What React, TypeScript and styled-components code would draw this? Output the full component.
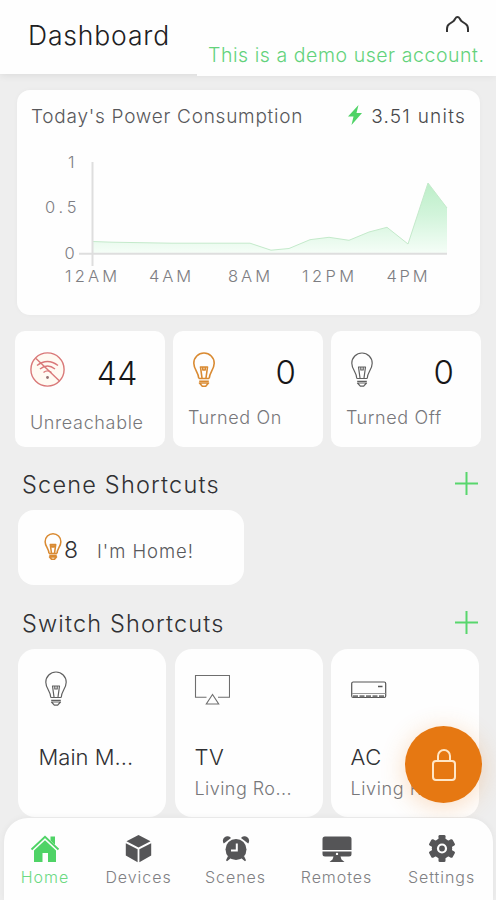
import React from "react";
import styled, { createGlobalStyle } from "styled-components";

const GlobalStyle = createGlobalStyle`
  *, *::before, *::after { box-sizing: border-box; }
  body { margin: 0; background: #eeeeee; font-family: Inter, "Liberation Sans", sans-serif; font-weight: 300; }
  svg { display: block; flex: none; }
`;

const Screen = styled.div`
  position: relative;
  width: 496px;
  height: 900px;
  overflow: hidden;
  background: #eeeeee;
  display: flex;
  flex-direction: column;
`;

const Label = styled.span<{ $size: number; $color?: string; $track?: number; $line?: number }>`
  font-size: ${(p) => p.$size}px;
  line-height: ${(p) => p.$line ?? 24}px;
  letter-spacing: ${(p) => p.$track ?? 0}px;
  color: ${(p) => p.$color ?? "#77777a"};
  white-space: nowrap;
`;

const Header = styled.header`
  position: relative;
  flex: none;
  height: 74px;
  padding: 20px 0 0 28px;
  background: #fefefe;
  box-shadow: 0 1px 8px rgba(0, 0, 0, 0.09);
`;

const HomeOutline = styled.svg`
  position: absolute;
  top: 14px;
  left: 445px;
`;

const DemoBanner = styled.div`
  position: absolute;
  top: 42px;
  right: 0;
  width: 299px;
  height: 34px;
  padding: 1px 0 0 11px;
  background: #fefefe;
`;

const PowerCard = styled.section`
  flex: none;
  margin: 16px 16px 0 17px;
  height: 225px;
  background: #fefefe;
  border-radius: 13px;
  box-shadow: 0 0 5px rgba(0, 0, 0, 0.03);
`;

const PowerHeading = styled.div`
  display: flex;
  justify-content: space-between;
  align-items: center;
  height: 52px;
  padding: 1px 14px 0 14px;
`;

const Units = styled.div`
  display: flex;
  align-items: center;
  gap: 8px;
`;

const Bolt = styled.svg`
  margin: -4px 1px 0 0;
`;

const Stats = styled.section`
  flex: none;
  display: grid;
  grid-template-columns: repeat(3, 150px);
  column-gap: 8px;
  margin: 16px 0 0 15.4px;
`;

const StatCard = styled.div<{ $gap: number }>`
  height: 116px;
  padding: 21px 0 0 14.5px;
  background: #fefefe;
  border-radius: 10px;
  display: flex;
  flex-direction: column;
  gap: ${(p) => p.$gap}px;
`;

const StatTop = styled.div<{ $drop: number }>`
  display: flex;
  justify-content: space-between;
  align-items: flex-start;
  height: 40px;
  padding-right: 27.5px;
  & > span { margin-top: ${(p) => p.$drop}px; }
`;

const SectionHeading = styled.div<{ $top: number }>`
  flex: none;
  display: flex;
  justify-content: space-between;
  align-items: flex-start;
  height: 30px;
  margin-top: ${(p) => p.$top}px;
  padding: 1px 18px 0 22px;
`;

const AddIcon = styled.svg`
  margin-top: 2px;
`;

const SceneCard = styled.div`
  flex: none;
  display: flex;
  width: 226px;
  height: 75px;
  margin: 11px 0 0 18px;
  padding: 23px 0 0 25.5px;
  background: #fefefe;
  border-radius: 16px;
`;

const SceneCount = styled.div`
  margin: 5px 0 0 2.5px;
  width: 33px;
`;

const SceneName = styled.div`
  margin-top: 6px;
`;

const Switches = styled.section`
  flex: none;
  display: grid;
  grid-template-columns: repeat(3, 148px);
  column-gap: 8.5px;
  margin: 11px 0 0 18px;
`;

const SwitchCard = styled.div`
  display: flex;
  flex-direction: column;
  height: 168px;
  padding: 22px 0 0 19.5px;
  background: #fefefe;
  border-radius: 17px;
`;

const SwitchIcon = styled.div<{ $left?: number }>`
  height: 72px;
  padding-left: ${(p) => p.$left ?? 0}px;
`;

const SwitchText = styled.div<{ $indent?: number }>`
  display: flex;
  flex-direction: column;
  gap: 6px;
  padding-left: ${(p) => p.$indent ?? 0}px;
`;

const LockButton = styled.button`
  position: absolute;
  left: 405px;
  top: 726px;
  width: 77px;
  height: 77px;
  padding: 0;
  border: 0;
  border-radius: 50%;
  background: #e67812;
  box-shadow: 0 4px 24px rgba(240, 140, 50, 0.3);
  display: grid;
  place-items: center;
`;

const NavBar = styled.nav`
  position: absolute;
  left: 4px;
  right: 3px;
  bottom: 0;
  height: 82px;
  background: #fefefe;
  border-radius: 24px 24px 0 0;
  box-shadow: 0 0 7px rgba(0, 0, 0, 0.05);
  display: grid;
  grid-template-columns: 82px 105px 89px 113px 97px;
`;

const NavItem = styled.a`
  display: flex;
  flex-direction: column;
  align-items: center;
  padding-top: 16px;
  gap: 2px;
`;

const GREEN = "#4fd366";
const ORANGE = "#d98a32";

function Bulb({ color, width = 22, height = 35, stroke = 1.2 }: { color: string; width?: number; height?: number; stroke?: number }) {
  return (
    <svg width={width} height={height} viewBox="0 0 22 35" fill="none" stroke={color} strokeWidth={stroke} strokeLinejoin="round">
      <path d="M5.8 26.5C5.8 20.5.8 17.5.8 11.2a10.2 10.2 0 0 1 20.4 0c0 6.3-5 9.3-5 15.3" />
      <path d="M9 26L7.5 15h7L13 26M9.8 15v3h2.4v-3" />
      <path d="M5.8 26.5h10.4M6.2 29.3h9.6M6.5 31l2.8 3.2h3.4l2.8-3.200z" />
    </svg>
  );
}

function NoSignal() {
  return (
    <svg width="35" height="35" viewBox="0 0 35 35" fill="none" stroke="#d97878" strokeWidth="1.4">
      <circle cx="17.5" cy="17.5" r="16.6" fill="#fffaf2" />
      <path d="M6 6.5L29.5 29" />
      <path d="M7 13.5q10.5-8 21 0M10 17q7.5-6 15 0M13.5 20.5q4-3.3 8 0" />
      <circle cx="17.5" cy="25.5" r="1.4" fill="#927171" stroke="none" />
    </svg>
  );
}

function Plus() {
  return (
    <AddIcon width="23" height="23" viewBox="0 0 23 23" stroke="#58d66d" strokeWidth="2">
      <path d="M11.5 0v23M0 11.5h23" />
    </AddIcon>
  );
}

function PowerChart() {
  const line = "M75 99.5L95 100.2L154 101.2H233L254 108.2L272 106.5L293 97.7L312 95.3L332 98.3L352 90L370 85.3L391 102L411 41L430 66";
  const tick = { fontSize: 16.5, fill: "#7d7d82", lengthAdjust: "spacing" as const };
  return (
    <svg width="463" height="173" viewBox="0 0 463 173">
      <defs>
        <linearGradient id="usage" x1="0" y1="41" x2="0" y2="112" gradientUnits="userSpaceOnUse">
          <stop offset="0" stopColor="#bceec8" />
          <stop offset="0.45" stopColor="#d2f4db" />
          <stop offset="1" stopColor="#f6fef8" />
        </linearGradient>
      </defs>
      <path d={`${line}V112H75Z`} fill="url(#usage)" />
      <path d={line} fill="none" stroke="#c4eacb" strokeWidth="1" />
      <path d="M75.5 20V124M62 111.7H430" stroke="#dedede" strokeWidth="2" fill="none" />
      <text {...tick} x="51" y="25.5">1</text>
      <text {...tick} x="28" y="71" textLength="31.5">0.5</text>
      <text {...tick} x="47.5" y="117">0</text>
      <text {...tick} x="48" y="140" textLength="52">12AM</text>
      <text {...tick} x="132" y="140" textLength="42">4AM</text>
      <text {...tick} x="211" y="140" textLength="42">8AM</text>
      <text {...tick} x="285" y="140" textLength="52">12PM</text>
      <text {...tick} x="369.5" y="140" textLength="41">4PM</text>
    </svg>
  );
}

function Television() {
  return (
    <svg width="36" height="34" viewBox="0 0 36 34" fill="none" stroke="#6e6e6e" strokeWidth="1.1">
      <path d="M12.5 26.3H1.5V4.5h34v21.8H24" />
      <path d="M18.5 23.5L12.3 33h12.4z" />
    </svg>
  );
}

function AirConditioner() {
  return (
    <svg width="36" height="28" viewBox="0 0 36 28" fill="none" stroke="#555" strokeWidth="1.2">
      <rect x=".7" y="11" width="34" height="15.5" rx="1.5" />
      <path d="M1 22.5h33.5" stroke="#999" />
      <path d="M2 25.3h32" strokeWidth="2" strokeDasharray="5 1.5" stroke="#777" />
      <path d="M27 15.500h4.500" strokeWidth="1.500" />
    </svg>
  );
}

function NavIcon({ name }: { name: string }) {
  if (name === "Home")
    return (
      <svg width="30" height="29" viewBox="0 0 30 29">
        <path d="M1.5 15.5L15 2.8L28.5 15.5" fill="none" stroke={GREEN} strokeWidth="1.9" />
        <path d="M20.5 2.5H25v8.3l-4.5-4.2zM15 6.2L26 16.5V28h-8v-9h-5.5v9H4V16.5z" fill={GREEN} />
      </svg>
    );
  if (name === "Devices")
    return (
      <svg width="27" height="29" viewBox="0 0 27 29" fill="#555557">
        <path d="M13.5 1L25.5 7.3L13.5 13.5L1.5 7.3zM.8 9.2L12.6 15.3V28.3L.8 21.5zM26.2 9.2L14.4 15.3V28.3l11.8-6.8z" />
      </svg>
    );
  if (name === "Scenes")
    return (
      <svg width="28" height="29" viewBox="0 0 28 29" fill="#555557">
        <path d="M1.8 9.5a4.5 4.5 0 0 1 7.2-5.5zM26.2 9.5a4.5 4.5 0 0 0-7.2-5.5zM6 22l3 2-4 3.2-1-1zM22 22l-3 2 4 3.2 1-1z" />
        <circle cx="14" cy="15.5" r="10.5" />
        <path d="M14.8 9.5v7H9" fill="none" stroke="#fefefe" strokeWidth="2" />
      </svg>
    );
  if (name === "Remotes")
    return (
      <svg width="30" height="29" viewBox="0 0 30 29" fill="#555557">
        <path d="M3 2.5h24a2.5 2.5 0 0 1 2.5 2.5v11H.5V5A2.5 2.5 0 0 1 3 2.5zM.5 17.5h29v2.5a2.5 2.5 0 0 1-2.5 2.5h-8.5l1 3 3 2.5H7.5l3-2.5 1-3H3a2.5 2.5 0 0 1-2.5-2.5z" />
        <circle cx="15" cy="19.9" r="1.2" fill="#fefefe" />
      </svg>
    );
  return (
    <svg width="28" height="29" viewBox="0 0 28 29" fill="#555557">
      <circle cx="14" cy="14.5" r="10.2" />
      {[0, 60, 120].map((a) => (
        <rect key={a} x="10.5" y="1" width="7" height="27" rx="1.3" transform={`rotate(${a} 14 14.5)`} />
      ))}
      <circle cx="14" cy="14.5" r="4" stroke="#fefefe" strokeWidth="2.2" />
    </svg>
  );
}

const navItems = ["Home", "Devices", "Scenes", "Remotes", "Settings"];

export default function App() {
  return (
    <Screen>
      <GlobalStyle />
      <Header>
        <Label $size={26.5} $line={30} $track={0.85} $color="#202022">Dashboard</Label>
        <HomeOutline width="25" height="20" viewBox="0 0 25 20" fill="none" stroke="#333" strokeWidth="2">
          <path d="M2 18v-3q0-3.500 2.300-5L8 7.500q1.200-.8 2-2.500 2.500-3.800 5 0 .8 1.700 2 2.500l3.700 2.500q2.300 1.500 2.300 5v3" />
        </HomeOutline>
        <DemoBanner>
          <Label $size={19.5} $track={0.55} $color="#63d27b">This is a demo user account.</Label>
        </DemoBanner>
      </Header>

      <PowerCard>
        <PowerHeading>
          <Label $size={19} $track={0.74} $color="#58585b">Today's Power Consumption</Label>
          <Units>
            <Bolt width="14" height="20" viewBox="0 0 14 20" fill={GREEN}>
              <path d="M10.5 0L0 11.5h5.5L3.5 20L14 8H8.5z" />
            </Bolt>
            <Label $size={19} $track={1.25} $color="#48484b">3.51 units</Label>
          </Units>
        </PowerHeading>
        <PowerChart />
      </PowerCard>

      <Stats>
        <StatCard $gap={19}>
          <StatTop $drop={1.5}>
            <NoSignal />
            <Label $size={32} $line={40} $track={0.5} $color="#161618">44</Label>
          </StatTop>
          <Label $size={18} $track={0.65}>Unreachable</Label>
        </StatCard>
        <StatCard $gap={14}>
          <StatTop $drop={-0.5}>
            <SwitchIcon $left={5.5}><Bulb color={ORANGE} stroke={1.6} /></SwitchIcon>
            <Label $size={33} $line={40} $color="#161618">0</Label>
          </StatTop>
          <Label $size={18} $track={0.6}>Turned On</Label>
        </StatCard>
        <StatCard $gap={14}>
          <StatTop $drop={-0.5}>
            <SwitchIcon $left={5.5}><Bulb color="#606060" /></SwitchIcon>
            <Label $size={33} $line={40} $color="#161618">0</Label>
          </StatTop>
          <Label $size={18} $track={0.6}>Turned Off</Label>
        </StatCard>
      </Stats>

      <SectionHeading $top={22}>
        <Label $size={23.5} $line={30} $track={1.2} $color="#303033">Scene Shortcuts</Label>
        <Plus />
      </SectionHeading>
      <SceneCard>
        <Bulb color={ORANGE} width={18} height={27} stroke={2} />
        <SceneCount><Label $size={23} $color="#303033">8</Label></SceneCount>
        <SceneName><Label $size={18.5} $track={0.95} $color="#58585b">I'm Home!</Label></SceneName>
      </SceneCard>
      <SectionHeading $top={22.5}>
        <Label $size={23.5} $line={30} $track={1.15} $color="#303033">Switch Shortcuts</Label>
        <Plus />
      </SectionHeading>

      <Switches>
        <SwitchCard>
          <SwitchIcon $left={7.5}><Bulb color="#606060" /></SwitchIcon>
          <SwitchText $indent={1}>
            <Label $size={22} $line={28} $color="#303033">Main M...</Label>
          </SwitchText>
        </SwitchCard>
        <SwitchCard>
          <SwitchIcon><Television /></SwitchIcon>
          <SwitchText $indent={0.5}>
            <Label $size={22} $line={28} $track={0.5} $color="#303033">TV</Label>
            <Label $size={18} $track={0.45}>Living Ro...</Label>
          </SwitchText>
        </SwitchCard>
        <SwitchCard>
          <SwitchIcon><AirConditioner /></SwitchIcon>
          <SwitchText>
            <Label $size={22} $line={28} $track={0.5} $color="#303033">AC</Label>
            <Label $size={18} $track={0.6}>Living Ro...</Label>
          </SwitchText>
        </SwitchCard>
      </Switches>

      <LockButton aria-label="Lock">
        <svg width="26" height="34" viewBox="0 0 26 34" fill="none" stroke="#ffe6c6" strokeWidth="2">
          <rect x="2" y="13" width="22" height="19" rx="3" />
          <path d="M7 13V8a6 6 0 0 1 12 0v5" />
        </svg>
      </LockButton>

      <NavBar>
        {navItems.map((name) => (
          <NavItem key={name}>
            <NavIcon name={name} />
            <Label $size={16} $track={0.95} $color={name === "Home" ? "#6bd982" : "#808083"}>{name}</Label>
          </NavItem>
        ))}
      </NavBar>
    </Screen>
  );
}
